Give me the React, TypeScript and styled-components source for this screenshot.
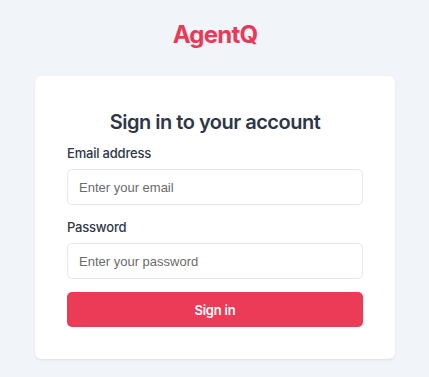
import React from 'react';
import styled, { createGlobalStyle } from 'styled-components';

const GlobalStyle = createGlobalStyle`
  html, body {
    margin: 0;
    padding: 0;
    background: #f1f5f9;
    font-family: Inter, "Noto Sans", sans-serif;
  }
  * {
    box-sizing: border-box;
  }
`;

const Page = styled.div`
  min-height: 377px;
  display: flex;
  flex-direction: column;
  align-items: center;
  padding: 19px 34px 0 35px;
`;

const Logo = styled.h1`
  margin: 0;
  font-size: 24px;
  line-height: 32px;
  font-weight: 700;
  letter-spacing: -0.75px;
  color: #e83a58;
`;

const Card = styled.form`
  margin-top: 25px;
  width: 360px;
  background: #ffffff;
  border-radius: 6px;
  box-shadow: 0 1px 3px rgba(0, 0, 0, 0.06), 0 1px 2px rgba(0, 0, 0, 0.04);
  padding: 32px;
  display: flex;
  flex-direction: column;
`;

const Title = styled.h2`
  margin: 0 0 7px;
  text-align: center;
  font-size: 20px;
  line-height: 28px;
  font-weight: 600;
  letter-spacing: -0.5px;
  color: #2d3748;
`;

const Field = styled.div`
  display: flex;
  flex-direction: column;
  margin-bottom: 12px;
`;

const Label = styled.label`
  font-size: 13px;
  line-height: 20px;
  font-weight: 500;
  letter-spacing: -0.2px;
  color: #2d3748;
  margin-bottom: 6px;
`;

const Input = styled.input`
  height: 36px;
  width: 100%;
  padding: 0 11px;
  border: 1px solid #e2e8f0;
  border-radius: 5px;
  font-family: "Liberation Sans", Arial, sans-serif;
  font-size: 13px;
  color: #2d3748;
  background: #fff;
  outline: none;

  &::placeholder {
    color: #6b6b6b;
  }
`;

const Button = styled.button`
  margin-top: 1px;
  height: 35px;
  width: 100%;
  border: none;
  border-radius: 5px;
  background: #ec3b57;
  color: #ffffff;
  font-family: Inter, sans-serif;
  font-size: 13px;
  font-weight: 600;
  letter-spacing: -0.2px;
  cursor: pointer;
`;

export default function App() {
  return (
    <>
      <GlobalStyle />
      <Page>
        <Logo>AgentQ</Logo>
        <Card onSubmit={(e) => e.preventDefault()}>
          <Title>Sign in to your account</Title>
          <Field>
            <Label htmlFor="email">Email address</Label>
            <Input id="email" type="email" placeholder="Enter your email" />
          </Field>
          <Field>
            <Label htmlFor="password">Password</Label>
            <Input id="password" type="password" placeholder="Enter your password" />
          </Field>
          <Button type="submit">Sign in</Button>
        </Card>
      </Page>
    </>
  );
}
